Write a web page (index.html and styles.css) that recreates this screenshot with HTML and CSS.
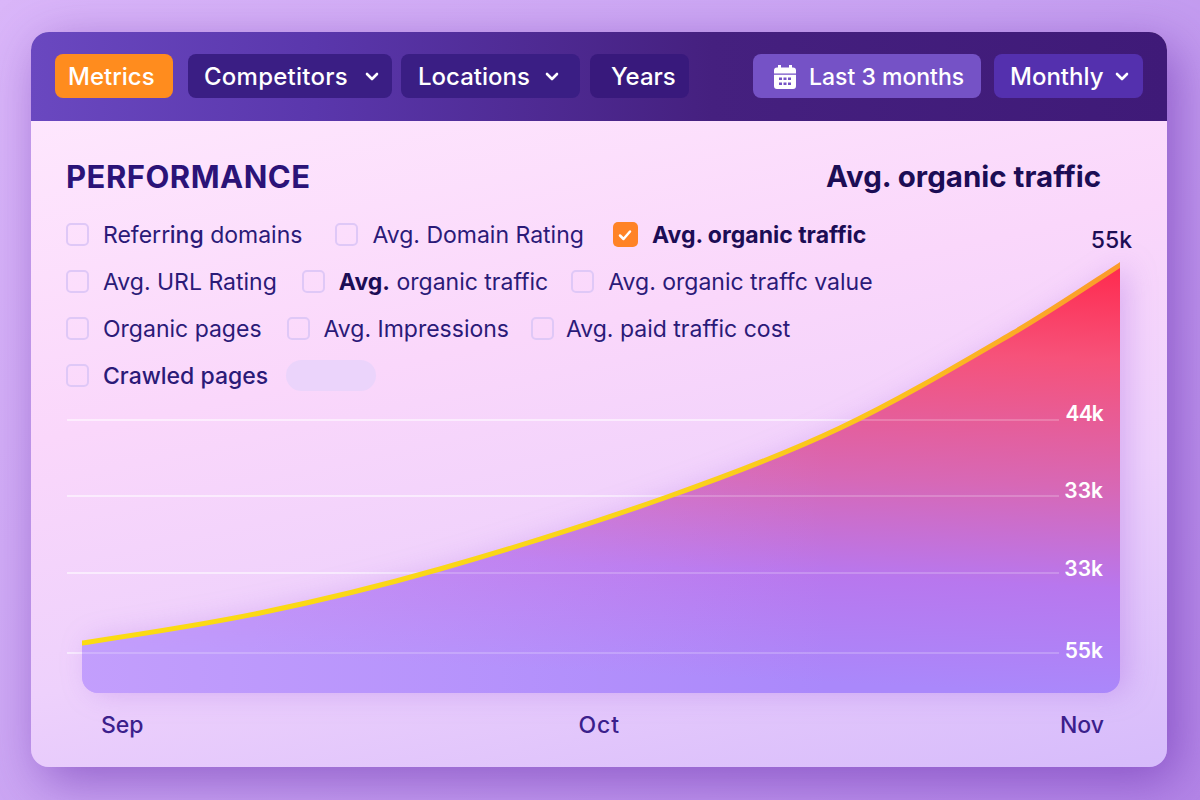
FILE: index.html
```html
<!DOCTYPE html>
<html lang="en">

<head>
  <meta charset="UTF-8">
  <title>Performance</title>
  <link rel="stylesheet" href="styles.css">
</head>

<body>
  <div class="card">
    <div class="toolbar">
      <span class="btn btn-orange">Metrics</span>
      <span class="btn btn-dark btn-competitors">Competitors
        <svg class="chev" viewBox="0 0 14 9"><path d="M2 2l5 5 5-5" /></svg>
      </span>
      <span class="btn btn-dark btn-locations">Locations
        <svg class="chev" viewBox="0 0 14 9"><path d="M2 2l5 5 5-5" /></svg>
      </span>
      <span class="btn btn-dark btn-years">Years</span>
      <span class="btn btn-light">
        <svg class="cal" viewBox="0 0 22 24">
          <path fill="#fff" d="M4 0h3v2.500h8V0h3v2.500h1a3 3 0 0 1 3 3V21a3 3 0 0 1-3 3H3a3 3 0 0 1-3-3V5.500a3 3 0 0 1 3-3h1z" />
          <path fill="#7552c6" d="M0 8.500h22v1.200H0zM5 12.500h3v2.500H5zM9.500 12.500h3v2.500h-3zM14 12.500h3v2.500h-3zM5 17.500h3V20H5zM9.500 17.500h3V20h-3zM14 17.500h3V20h-3z" />
        </svg>
        Last 3 months
      </span>
      <span class="btn btn-mid">Monthly
        <svg class="chev" viewBox="0 0 14 9"><path d="M2 2l5 5 5-5" /></svg>
      </span>
    </div>

    <div class="content">
      <div class="head">
        <h1 class="title">PERFORMANCE</h1>
        <div class="subtitle">Avg. organic traffic</div>
      </div>

      <div class="filters">
        <div class="row row-1">
          <label class="check"><i class="box"></i><span>Referr<span class="semi">ing</span> domains</span></label>
          <label class="check"><i class="box"></i>Avg. Domain Rating</label>
          <label class="check on"><i class="box">
              <svg viewBox="0 0 14 12"><path d="M2 6.500 5.500 10 12 2.500" /></svg>
            </i>Avg. organic traffic</label>
        </div>
        <div class="row row-2">
          <label class="check"><i class="box"></i>Avg. URL Rating</label>
          <label class="check"><i class="box"></i><span><b>Avg.</b> organic traffic</span></label>
          <label class="check"><i class="box"></i>Avg. organic traffc value</label>
        </div>
        <div class="row row-3">
          <label class="check"><i class="box"></i>Organic pages</label>
          <label class="check"><i class="box"></i>Avg. Impressions</label>
          <label class="check"><i class="box"></i>Avg. paid traffic cost</label>
        </div>
        <div class="row row-4">
          <label class="check"><i class="box"></i><span class="semi">Crawled pages</span></label>
          <span class="pill"></span>
        </div>
      </div>
    </div>

    <div class="chart">
      <svg class="plot" viewBox="0 0 1136 735">
        <defs>
          <linearGradient id="fillArea" gradientUnits="userSpaceOnUse" x1="1040" y1="232" x2="1020" y2="661">
            <stop offset="0" stop-color="#ff2a4e" />
            <stop offset=".22" stop-color="#f6527a" />
            <stop offset=".52" stop-color="#d768b6" />
            <stop offset=".75" stop-color="#b877ee" />
            <stop offset="1" stop-color="#aa88fb" />
          </linearGradient>
          <linearGradient id="fillLeft" gradientUnits="userSpaceOnUse" x1="51" y1="0" x2="800" y2="0">
            <stop offset="0" stop-color="#e8c0ff" stop-opacity=".4" />
            <stop offset="1" stop-color="#e8c0ff" stop-opacity="0" />
          </linearGradient>
          <linearGradient id="lineStroke" gradientUnits="userSpaceOnUse" x1="51" y1="0" x2="1089" y2="0">
            <stop offset="0" stop-color="#fbdb12" />
            <stop offset=".55" stop-color="#fad41a" />
            <stop offset=".78" stop-color="#fcc21c" />
            <stop offset="1" stop-color="#fb9a2c" />
          </linearGradient>
          <clipPath id="plotClip">
            <rect x="51" y="200" width="1038" height="470" />
          </clipPath>
          <clipPath id="areaClip">
            <path d="M51 611C110.300 602.100 169.700 593.300 229 581C289 568.600 349 554.100 409 537C484.700 515.400 560.300 491.700 636 465C693.700 444.700 751.300 423.300 809 396C866.700 368.700 924.300 334.600 982 301C1017.700 280.200 1053.300 256.200 1089 233V661H51Z" />
          </clipPath>
        </defs>
        <g class="grid grid-under">
          <path d="M36 388.100H1028" />
          <path d="M36 464.100H1028" />
          <path d="M36 541.100H1028" />
          <path d="M36 621.100H1028" />
        </g>
        <path class="area" fill="url(#fillArea)" d="M51 611C110.300 602.100 169.700 593.300 229 581C289 568.600 349 554.100 409 537C484.700 515.400 560.300 491.700 636 465C693.700 444.700 751.300 423.300 809 396C866.700 368.700 924.300 334.600 982 301C1017.700 280.200 1053.300 256.200 1089 233V645a16 16 0 0 1-16 16H67a16 16 0 0 1-16-16Z" />
        <path fill="url(#fillLeft)" d="M51 611C110.300 602.100 169.700 593.300 229 581C289 568.600 349 554.100 409 537C484.700 515.400 560.300 491.700 636 465C693.700 444.700 751.300 423.300 809 396V661H67a16 16 0 0 1-16-16Z" />
        <g class="grid grid-over" clip-path="url(#areaClip)">
          <path d="M36 388.100H1028" />
          <path d="M36 464.100H1028" />
          <path d="M36 541.100H1028" />
          <path d="M36 621.100H1028" />
        </g>
        <path class="curve" stroke="url(#lineStroke)" clip-path="url(#plotClip)" d="M41 612.500L51 611C110.300 602.100 169.700 593.300 229 581C289 568.600 349 554.100 409 537C484.700 515.400 560.300 491.700 636 465C693.700 444.700 751.300 423.300 809 396C866.700 368.700 924.300 334.600 982 301C1017.700 280.200 1053.300 256.200 1089 233L1100 226" />
      </svg>
      <span class="val val-top">55k</span>
      <span class="val val-44">44k</span>
      <span class="val val-33a">33k</span>
      <span class="val val-33b">33k</span>
      <span class="val val-55">55k</span>
    </div>

    <div class="axis">
      <span>Sep</span>
      <span class="axis-mid">Oct</span>
      <span>Nov</span>
    </div>
  </div>
</body>

</html>
```

FILE: styles.css
```css
* {
  margin: 0;
  padding: 0;
  box-sizing: border-box;
}

html,
body {
  width: 100%;
  height: 100%;
}

body {
  display: flex;
  flex-direction: column;
  padding: 32px 33px 33px 31px;
  overflow: hidden;
  background: linear-gradient(135deg, #dab6f9 0%, #c8a2f2 50%, #b486e8 100%);
  font-family: "Inter", "Liberation Sans", sans-serif;
  color: #2a1470;
}

.card {
  position: relative;
  flex: 1;
  display: flex;
  flex-direction: column;
  border-radius: 18px;
  overflow: hidden;
  background: linear-gradient(168deg, #ffebfe 0%, #fad7fb 42%, #eed1fc 68%, #d6bbfb 100%);
  box-shadow: 10px 14px 50px rgba(100, 40, 170, .55);
}

/* top bar */
.toolbar {
  display: flex;
  align-items: center;
  height: 89px;
  padding: 0 24px 1px;
  background: linear-gradient(90deg, #6a48c0 0%, #5a37ac 25%, #45207f 60%, #3f1a78 100%);
}

.btn {
  display: flex;
  align-items: center;
  height: 44px;
  padding-top: 1px;
  border-radius: 8px;
  color: #fff;
  font-size: 24px;
  font-weight: 500;
  white-space: nowrap;
}

.btn-orange {
  width: 118px;
  padding-left: 13px;
  margin-right: 15px;
  background: #ff8c1e;
}

.btn-dark {
  background: #3a1e84;
}

.btn-competitors {
  width: 204px;
  padding-left: 16px;
  margin-right: 9px;
  letter-spacing: .25px;
}

.btn-competitors .chev {
  margin-right: 13px;
}

.btn-locations {
  width: 179px;
  padding-left: 17px;
  margin-right: 10px;
}

.btn-locations .chev {
  margin-right: 21px;
}

.btn-years {
  width: 99px;
  padding-left: 21px;
  margin-right: 64px;
  background: #38197c;
}

.btn-light {
  width: 228px;
  padding-left: 21px;
  margin-right: 13px;
  font-size: 23px;
  background: #7552c6;
}

.btn-mid {
  width: 149px;
  padding-left: 16px;
  background: #5430ae;
}

.chev {
  width: 14px;
  height: 9px;
  margin-left: auto;
  margin-right: 14px;
  fill: none;
  stroke: #fff;
  stroke-width: 2.6;
  stroke-linecap: round;
  stroke-linejoin: round;
}

.cal {
  width: 22px;
  height: 24px;
  margin-right: 13px;
}

/* heading and checks */
.content {
  padding: 0 66px 0 35px;
}

.head {
  display: flex;
  justify-content: space-between;
  align-items: center;
  padding-top: 36px;
  height: 74px;
}

.title {
  font-size: 31px;
  font-weight: 700;
  letter-spacing: .5px;
  color: #2b1378;
}

.subtitle {
  font-size: 29.5px;
  font-weight: 700;
  color: #1c0d55;
}

.filters {
  display: flex;
  flex-direction: column;
  gap: 22px;
  margin-top: 27px;
  font-size: 23px;
}

.row {
  display: flex;
  height: 25px;
  align-items: center;
}

.check {
  display: flex;
  align-items: center;
  gap: 14px;
  color: #2b1a78;
  white-space: nowrap;
}

.check b {
  font-weight: 700;
  color: #1c0d55;
}

.semi {
  font-weight: 500;
}

.row .check+.check {
  margin-left: 25px;
}

.row-1 .check:nth-child(2) {
  margin-left: 33px;
}

.row-1 .check:nth-child(3) {
  margin-left: 29px;
}

.row-2 .check:nth-child(3) {
  margin-left: 23px;
}

.row-3 .check:nth-child(3) {
  margin-left: 22px;
  gap: 12px;
}

.box {
  display: flex;
  flex-shrink: 0;
  align-items: center;
  justify-content: center;
  width: 23px;
  height: 23px;
  border: 2px solid #dfc8f7;
  border-radius: 5px;
}

.on {
  font-weight: 700;
  color: #1c0d55;
}

.on .box {
  width: 25px;
  height: 25px;
  border: none;
  background: #ff8326;
}

.on svg {
  width: 14px;
  height: 12px;
  fill: none;
  stroke: #fff;
  stroke-width: 2.5;
  stroke-linecap: round;
  stroke-linejoin: round;
}

.pill {
  width: 90px;
  height: 31px;
  margin-left: 18px;
  border-radius: 16px;
  background: #ebd4fb;
}

/* chart overlays the whole card */
.chart {
  position: absolute;
  inset: 0;
}

.plot {
  display: block;
  width: 100%;
  height: 100%;
}

.grid {
  fill: none;
  stroke: #fff;
  stroke-width: 2;
}

.grid-under {
  stroke-opacity: .55;
}

.grid-over {
  stroke-opacity: .2;
}

.area {
  filter: drop-shadow(8px 0 14px rgba(150, 80, 220, .28));
}

.curve {
  fill: none;
  stroke-width: 5;
}

.val {
  position: absolute;
  right: 64px;
  font-size: 21px;
  font-weight: 600;
  color: #fff;
}

.val-top {
  top: 194px;
  right: 35px;
  font-size: 23px;
  font-weight: 500;
  color: #1c0d55;
}

.val-44 {
  top: 369px;
  letter-spacing: -.8px;
}

.val-33a {
  top: 446px;
}

.val-33b {
  top: 524px;
}

.val-55 {
  top: 606px;
}

.axis {
  display: flex;
  justify-content: space-between;
  margin-top: auto;
  padding: 0 63px 28px 70px;
  font-size: 23px;
  font-weight: 500;
  color: #3c1f8c;
}

.axis-mid {
  margin-right: 5px;
  letter-spacing: 1px;
}
```
